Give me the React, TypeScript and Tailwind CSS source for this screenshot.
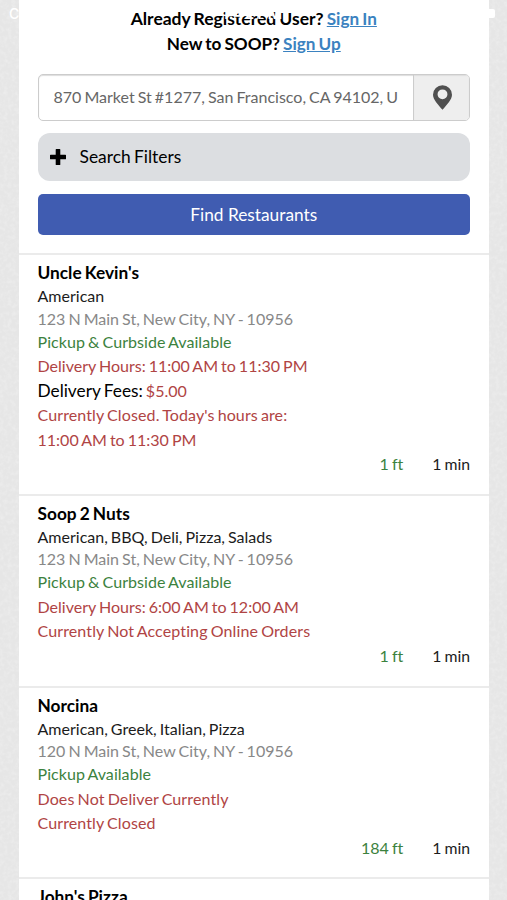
import type { ReactNode } from "react";

type Restaurant = {
  name: string;
  cuisine: string;
  address: string;
  pickup: string;
  details: ReactNode[];
  distance: string;
};

const restaurants: Restaurant[] = [
  {
    name: "Uncle Kevin's",
    cuisine: "American",
    address: "123 N Main St, New City, NY - 10956",
    pickup: "Pickup & Curbside Available",
    details: [
      "Delivery Hours: 11:00 AM to 11:30 PM",
      <>
        <span className="text-[17.3px] text-black">Delivery Fees:</span> $5.00
      </>,
      <span className="tracking-[0.1px]">Currently Closed. Today's hours are:</span>,
      "11:00 AM to 11:30 PM",
    ],
    distance: "1 ft",
  },
  {
    name: "Soop 2 Nuts",
    cuisine: "American, BBQ, Deli, Pizza, Salads",
    address: "123 N Main St, New City, NY - 10956",
    pickup: "Pickup & Curbside Available",
    details: [
      "Delivery Hours: 6:00 AM to 12:00 AM",
      <span className="tracking-[0.11px]">Currently Not Accepting Online Orders</span>,
    ],
    distance: "1 ft",
  },
  {
    name: "Norcina",
    cuisine: "American, Greek, Italian, Pizza",
    address: "120 N Main St, New City, NY - 10956",
    pickup: "Pickup Available",
    details: [
      <span className="tracking-[0.1px]">Does Not Deliver Currently</span>,
      <span className="tracking-[0.1px]">Currently Closed</span>,
    ],
    distance: "184 ft",
  },
  {
    name: "John's Pizza",
    cuisine: "",
    address: "",
    pickup: "",
    details: [],
    distance: "",
  },
];

function RestaurantCard({ r }: { r: Restaurant }) {
  return (
    <article className="border-t-2 border-[#ebebeb] px-[18.5px] pt-[6px] pb-[17.3px] text-[16.05px] leading-[24.5px] whitespace-nowrap">
      <h2 className="text-[17.3px] leading-[24px] font-bold text-black">{r.name}</h2>
      {r.address && (
        <>
          <p className="leading-[22.5px] text-[#1c1c1c]">{r.cuisine}</p>
          <p className="leading-[22px] text-[#888]">{r.address}</p>
          <p className="tracking-[0.05px] text-[#3c823e]">{r.pickup}</p>
          {r.details.map((d, i) => (
            <p key={i} className="text-[#b04444]">
              {d}
            </p>
          ))}
          <p className="flex justify-end gap-[29px]">
            <span className="text-[#3c823e]">{r.distance}</span>
            <span className="text-[15.8px] text-[#1c1c1c]">1 min</span>
          </p>
        </>
      )}
    </article>
  );
}

function PaperTexture() {
  return (
    <svg className="absolute inset-0 h-full w-full opacity-25" aria-hidden="true">
      <filter id="paper">
        <feTurbulence type="fractalNoise" baseFrequency="0.25" numOctaves="2" seed="4" />
        <feColorMatrix values="0 0 0 0 1  0 0 0 0 1  0 0 0 0 1  2 0 0 0 -0.8" />
      </filter>
      <rect width="100%" height="100%" filter="url(#paper)" />
    </svg>
  );
}

function StatusBar() {
  return (
    <div className="absolute inset-x-0 top-[4px] flex h-[18px] items-center justify-between pr-[12px] pl-[9px] font-['Inter',sans-serif] text-[14px] text-white">
      <span className="w-[90px] font-medium">Carrier</span>
      <span className="text-[16px] font-semibold">1:42 PM</span>
      <span className="flex w-[90px] justify-end">
        <span className="h-[9px] w-[28px] rounded-[2px] bg-white" />
      </span>
    </div>
  );
}

export default function App() {
  return (
    <div className="relative h-[900px] w-[507px] overflow-hidden bg-[#e6e6e6] font-['Lato',sans-serif] [font-variant-ligatures:none] [word-spacing:-1.1px]">
      <PaperTexture />
      <main className="relative mr-[18.5px] ml-[19px] bg-white">
        <div className="h-[253px] px-[18.5px] pt-[7px]">
          <div className="text-center text-[17.5px] leading-[24.5px] font-bold text-black">
            <p>
              Already Registered User?{" "}
              <a className="text-[17.15px] text-[#3b82c0] underline">Sign In</a>
            </p>
            <p className="text-[17.15px]">
              New to SOOP?{" "}
              <a className="text-[17.15px] text-[#3b82c0] underline">Sign Up</a>
            </p>
          </div>
          <div className="mt-[18px] flex h-[47px] overflow-hidden rounded-[5px] border-[1.5px] border-[#ccc] shadow-[inset_0_1px_1px_#ddd]">
            <div className="flex flex-1 items-center overflow-hidden pl-[15px] text-[16.05px] whitespace-nowrap text-[#666]">
              870 Market St #1277, San Francisco, CA 94102, U
            </div>
            <div className="flex w-[56px] items-center justify-center border-l-[1.5px] border-[#ccc] bg-[#eee] shadow-[inset_0_1px_1px_#ddd]">
              <svg viewBox="0 0 20 26" className="ml-px h-[25px] w-[19px] fill-[#505050]">
                <path
                  fillRule="evenodd"
                  d="M10 0a10 10 0 0 1 10 10c0 5-5.500 10.500-10 16C5.500 20.500 0 15 0 10A10 10 0 0 1 10 0Zm0 4.500a5.200 5.200 0 1 0 0 10.400a5.200 5.200 0 0 0 0-10.400Z"
                />
              </svg>
            </div>
          </div>
          <div className="mt-3 flex h-12 items-center rounded-[12px] bg-[#dcdee1] pl-3 text-[17.4px] text-black">
            <svg viewBox="0 0 16 16" className="h-4 w-4">
              <path d="M5.700 .6Q5.700 0 6.300 0h3.400Q10.300 0 10.300 .6V5.700h5.100q.6 0 .6.600v3.400q0 .6-.6.600H10.300v5.100q0 .6-.6.600H6.300q-.6 0-.6-.6V10.300H.6Q0 10.300 0 9.700V6.300Q0 5.700 .6 5.700H5.700Z" />
            </svg>
            <span className="ml-[14px]">Search Filters</span>
          </div>
          <button className="mt-[13px] block h-[41px] w-full rounded-[5px] bg-[#405cb1] text-[17.3px] text-white">
            Find Restaurants
          </button>
        </div>
        {restaurants.map((r) => (
          <RestaurantCard key={r.name} r={r} />
        ))}
      </main>
      <StatusBar />
    </div>
  );
}
